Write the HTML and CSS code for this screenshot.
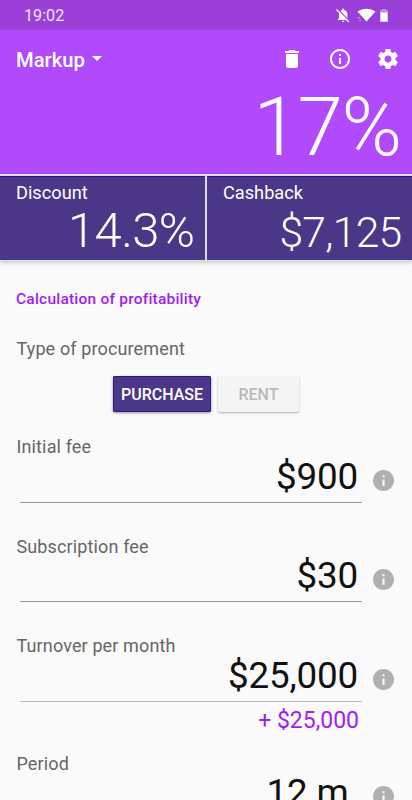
FILE: index.html
```html
<!DOCTYPE html>
<html lang="en">
<head>
<meta charset="utf-8">
<title>Markup</title>
<link rel="stylesheet" href="styles.css">
</head>
<body>
<svg class="defs" aria-hidden="true">
  <symbol id="info" viewBox="2 2 20 20"><path d="M12 2C6.48 2 2 6.48 2 12s4.48 10 10 10 10-4.48 10-10S17.52 2 12 2zm1 15h-2v-6h2v6zm0-8h-2V7h2v2z"/></symbol>
</svg>
<header class="status">
  <span class="time">19:02</span>
  <svg class="status-icons" viewBox="0 0 56 16">
    <path d="M2.500 12 4 10.300V6.500C4 4 5.300 2.300 7.300 1.900V1.300a.9.900 0 0 1 1.800 0v.6c2 .4 3.300 2.100 3.300 4.600v3.800L14 12zM6.900 12.700h2.600a1.300 1.300 0 0 1-2.600 0z"/>
    <path class="slash-gap" d="M2.500 1 15 13.500"/>
    <path class="slash" d="M1.400 1.500 13.900 14"/>
    <path d="M31.500 13.500 22.500 3.600C27.500-.3 35.500-.3 40.500 3.600z"/>
    <path class="faint" d="M23 9h2v1.200h-2zM24 11.500h2v1.200h-2z"/>
    <path class="faint" d="M47 1h4v1h2v3h-8V2h2z"/>
    <path d="M45.300 4.500h7.400v9.200h-7.400z"/>
  </svg>
</header>
<section class="hero">
  <div class="toolbar">
    <h1>Markup</h1>
    <span class="caret"></span>
    <nav class="actions">
      <svg viewBox="0 0 24 24"><path d="M6 19c0 1.100.9 2 2 2h8c1.100 0 2-.9 2-2V7H6v12zM19 4h-3.500l-1-1h-5l-1 1H5v2h14V4z"/></svg>
      <svg viewBox="0 0 24 24"><path d="M11 7h2v2h-2zm0 4h2v6h-2zm1-9C6.480 2 2 6.480 2 12s4.480 10 10 10 10-4.480 10-10S17.520 2 12 2zm0 18c-4.410 0-8-3.590-8-8s3.590-8 8-8 8 3.590 8 8-3.590 8-8 8z"/></svg>
      <svg viewBox="0 0 24 24"><path d="M19.430 12.980c.04-.32.070-.64.070-.98s-.03-.66-.07-.98l2.110-1.650c.19-.15.240-.42.120-.64l-2-3.460c-.12-.22-.39-.3-.61-.22l-2.490 1c-.52-.4-1.080-.73-1.690-.98l-.38-2.650C14.460 2.180 14.250 2 14 2h-4c-.25 0-.46.180-.49.420l-.38 2.650c-.61.250-1.170.590-1.690.98l-2.490-1c-.23-.09-.49 0-.61.220l-2 3.460c-.13.220-.07.490.12.640l2.110 1.650c-.04.320-.07.650-.07.980s.03.660.07.980l-2.110 1.650c-.19.150-.24.420-.12.640l2 3.460c.12.220.39.300.61.220l2.490-1c.52.400 1.080.730 1.690.98l.38 2.650c.03.240.24.420.49.420h4c.25 0 .46-.18.490-.42l.38-2.650c.61-.25 1.170-.59 1.690-.98l2.490 1c.23.090.49 0 .61-.22l2-3.460c.12-.22.070-.49-.12-.64l-2.110-1.650zM12 15.500c-1.930 0-3.500-1.570-3.500-3.500s1.570-3.500 3.500-3.500 3.500 1.570 3.500 3.500-1.570 3.500-3.500 3.500z"/></svg>
    </nav>
  </div>
  <div class="markup-value">17%</div>
</section>
<section class="stats">
  <div class="stat">
    <span class="stat-label">Discount</span>
    <span class="stat-value discount">14.3%</span>
  </div>
  <div class="stat">
    <span class="stat-label">Cashback</span>
    <span class="stat-value">$7,125</span>
  </div>
</section>
<main>
  <h2>Calculation of profitability</h2>
  <div class="label">Type of procurement</div>
  <div class="buttons">
    <button class="btn selected">PURCHASE</button>
    <button class="btn rent">RENT</button>
  </div>
  <div class="field initial">
    <div class="label">Initial fee</div>
    <div class="row"><div class="value">$900</div><svg class="info"><use href="#info"/></svg></div>
  </div>
  <div class="field">
    <div class="label">Subscription fee</div>
    <div class="row"><div class="value">$30</div><svg class="info"><use href="#info"/></svg></div>
  </div>
  <div class="field turnover">
    <div class="label">Turnover per month</div>
    <div class="row"><div class="value">$25,000</div><svg class="info"><use href="#info"/></svg></div>
    <div class="extra">+ $25,000</div>
  </div>
  <div class="field period">
    <div class="label">Period</div>
    <div class="row"><div class="value">12 m.</div><svg class="info"><use href="#info"/></svg></div>
  </div>
</main>
</body>
</html>
```
FILE: styles.css
```css
* { box-sizing: border-box; }
body {
  margin: 0;
  height: 800px;
  overflow: hidden;
  background: #fafafa;
  color: #111;
  font-family: Roboto, sans-serif;
}
h1, h2 { margin: 0; font-weight: 500; }
.defs { display: none; }
.status {
  display: flex;
  justify-content: space-between;
  height: 30px;
  padding: 6px 21px 0 24px;
  background: #9a40d9;
  color: #f3e4fc;
}
.time { font-size: 16.2px; line-height: 20px; }
.status-icons { width: 56px; height: 16px; margin-top: 2px; fill: #fff; }
.slash { stroke: #fff; stroke-width: 1.1; fill: none; }
.slash-gap { stroke: #9a40d9; stroke-width: 1.2; fill: none; }
.faint { opacity: .4; }
.hero { height: 144px; background: #b04afb; color: #fff; }
.toolbar { display: flex; align-items: center; height: 56px; padding: 1px 12px 0 16px; }
.toolbar h1 { font-size: 20.2px; line-height: 24px; padding-top: 2px; }
.caret {
  margin-left: 7px;
  border: 5px solid transparent;
  border-top-color: #fff;
  border-bottom: 0;
}
.actions { display: flex; gap: 24px; margin-left: auto; }
.actions svg { width: 24px; height: 24px; fill: #fff; }
.markup-value {
  padding-right: 11.5px;
  text-align: right;
  font-size: 82px;
  line-height: 82px;
  font-weight: 300;
  letter-spacing: -1.5px;
}
.stats {
  display: grid;
  grid-template-columns: 205px 205px;
  gap: 2px;
  height: 87px;
  padding: 2px 0 1px;
  background: #dedbe8;
  color: #fff;
  box-shadow: 0 2px 4px rgba(0, 0, 0, .18);
}
.stat {
  display: flex;
  flex-direction: column;
  padding: 5px 10.5px 0 16px;
  background: #4a3787;
  border-top: 1px solid #2c0f86;
}
.stat-label { font-size: 18.2px; line-height: 22px; }
.stat-value {
  text-align: right;
  font-size: 42.6px;
  line-height: 56px;
  font-weight: 300;
  letter-spacing: -.7px;
}
.discount { font-size: 49px; line-height: 53px; letter-spacing: -.6px; }
main { padding: 28px 16px 0; }
h2 { color: #a11df0; font-size: 15.5px; line-height: 20px; letter-spacing: .22px; }
.label { padding-left: .5px; color: #666; font-size: 18px; line-height: 21px; letter-spacing: .13px; height: 20px; }
.initial .label, .turnover .label { line-height: 20px; }
h2 + .label { margin-top: 29px; }
.buttons { display: flex; justify-content: center; gap: 7px; margin-top: 18px; }
.btn {
  width: 98px;
  height: 36px;
  padding: 2px 0 0;
  border: 0;
  border-radius: 2px;
  background: #f5f5f5;
  color: #b9b9b9;
  font: 500 16px/20px Roboto, sans-serif;
  box-shadow: 0 1px 2px rgba(0, 0, 0, .3);
}
.rent { width: 81px; }
.selected { background: #4a3787; color: #fff; box-shadow: inset 0 0 0 1px #35157f, 0 1px 3px rgba(0, 0, 0, .4); }
.field { margin-top: 33.3px; }
.buttons + .field { margin-top: 25px; }
.row { display: flex; gap: 11px; margin-left: 4px; }
.value {
  width: 342px;
  height: 46px;
  padding-right: 4px;
  border-bottom: 1px solid #999;
  text-align: right;
  font-size: 36.8px;
  line-height: 40px;
  letter-spacing: -.2px;
}
.info { flex: none; width: 21px; height: 21px; margin-top: 13px; fill: #b0b0b0; }
.turnover .value { border-bottom-color: #bbb; }
.extra {
  margin-top: 5px;
  padding-right: 37px;
  color: #a11df0;
  text-align: right;
  font-size: 23px;
  line-height: 28px;
}
.field.period { margin-top: 18.5px; }
```
